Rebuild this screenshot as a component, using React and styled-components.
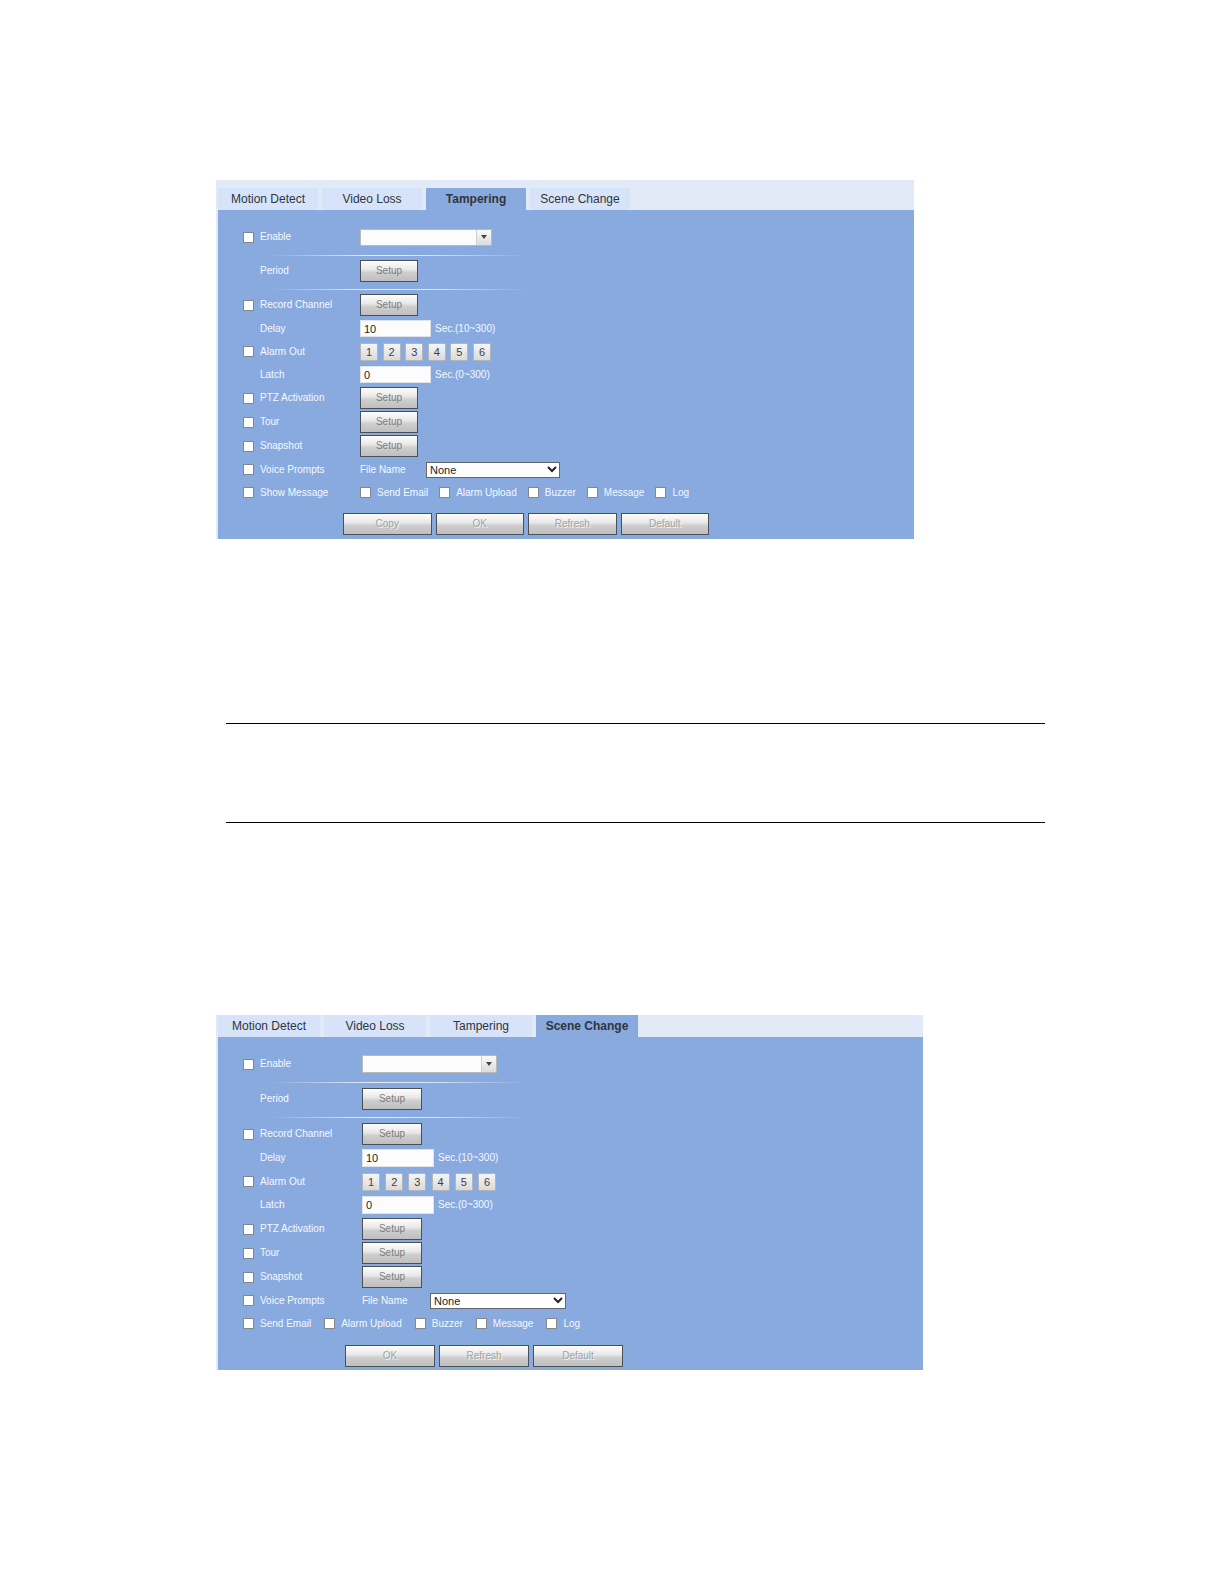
import React, { useId, useState } from "react";
import styled, { createGlobalStyle, ThemeProvider } from "styled-components";

const GlobalStyle = createGlobalStyle`
  body {
    margin: 0;
    background: #ffffff;
    font-family: "Liberation Sans", Arial, sans-serif;
  }
  *, *::before, *::after { box-sizing: border-box; }
  button, input, select { font-family: inherit; margin: 0; }
`;

const tamperingSizes = {
  panel: 696, stripPad: 8, tab: 100, label: 117, combo: 132, field: 71, fieldHeight: 17,
  fieldRow: 23, setup: 58, ruleGap: 3, fileLabel: 66, select: 134, checkGap: 11,
  footerIndent: 125, footer: 366, footerGap: 9, bottom: 4,
};

const sceneSizes = {
  panel: 705, stripPad: 0, tab: 102, label: 119, combo: 135, field: 72, fieldHeight: 18,
  fieldRow: 24, setup: 60, ruleGap: 4, fileLabel: 68, select: 136, checkGap: 13,
  footerIndent: 127, footer: 278, footerGap: 10, bottom: 3,
};

const Page = styled.main`
  padding: 180px 179px 60px 216px;
`;

const Panel = styled.section`
  max-width: ${(p) => p.theme.panel + 2}px;
  padding-left: 2px;
  background: #e2eaf8;
`;

const TabStrip = styled.div`
  display: flex;
  gap: 4px;
  padding-top: ${(p) => p.theme.stripPad}px;
`;

const Tab = styled.button`
  width: ${(p) => p.theme.tab}px;
  height: 22px;
  padding: 0;
  border: 0;
  background: ${(p) => (p.$active ? "#88aade" : "#d7e3f8")};
  color: #30353d;
  font-size: 12px;
  line-height: 22px;
  font-weight: ${(p) => (p.$active ? 700 : 400)};
`;

const Body = styled.form`
  padding: 15px 0 ${(p) => p.theme.bottom}px;
  background: #88aade;
  color: #f6f9ff;
  font-size: 10px;
  line-height: 12px;
`;

const Row = styled.div`
  display: flex;
  align-items: center;
  height: ${(p) => (p.$kind === "button" ? 24 : p.$kind === "field" ? p.theme.fieldRow : 23)}px;
  padding-left: 25px;
`;

const LabelCell = styled.div`
  flex: none;
  display: flex;
  align-items: center;
  width: ${(p) => p.theme.label}px;
  padding-left: ${(p) => (p.$indent ? 17 : 0)}px;
`;

const CheckPair = styled.span`
  display: flex;
  align-items: center;
  gap: 6px;
  white-space: nowrap;
`;

const Box = styled.input`
  appearance: none;
  width: 11px;
  height: 11px;
  border: 1px solid #84878c;
  background: #ffffff;
  &:checked { background: #3d5f96; box-shadow: inset 0 0 0 2px #ffffff; }
`;

const CheckList = styled.div`
  display: flex;
  gap: ${(p) => p.theme.checkGap}px;
`;

const Divider = styled.hr`
  width: 260px;
  height: 1px;
  margin: 6px 0 ${(p) => p.theme.ruleGap}px 50px;
  border: 0;
  background: linear-gradient(90deg, transparent, #e9eef6 40%, #dfe8f6 60%, transparent);
`;

const ComboFrame = styled.span`
  position: relative;
  display: block;
  width: ${(p) => (p.$plain ? p.theme.select : p.theme.combo)}px;
`;

const ComboSelect = styled.select`
  appearance: none;
  display: block;
  width: 100%;
  height: ${(p) => p.theme.fieldHeight}px;
  padding: 0 20px 0 4px;
  border: 1px solid #b9b9b6;
  border-radius: 0;
  background: #fcfcfc;
  font-size: 11px;
`;

const PlainSelect = styled(ComboSelect)`
  height: 16px;
  padding-left: 3px;
  border-color: #63676d;
  background: #ffffff;
  color: #1c1c1c;
`;

const ComboArrow = styled.span`
  position: absolute;
  top: 1px;
  right: 1px;
  bottom: 1px;
  display: flex;
  align-items: center;
  justify-content: center;
  width: 15px;
  border-left: 1px solid #d0d0d0;
  background: linear-gradient(#fafafa, #dcdcdc);
  pointer-events: none;
`;

const PlainArrow = styled(ComboArrow)`
  border-left: 0;
  background: none;
`;

const TextField = styled.input`
  width: ${(p) => p.theme.field}px;
  height: ${(p) => p.theme.fieldHeight}px;
  margin-right: 4px;
  padding: 0 3px;
  border: 1px solid #dfe3ea;
  background: #fcfcfc;
  color: #1c1c1c;
  font-size: 11px;
`;

const PushButton = styled.button`
  height: 22px;
  padding: 0;
  border: 1px solid #4b5057;
  background: linear-gradient(#fdfdfd, #e9e9e9 42%, #cecece 58%, #c0bebe);
  color: #7d7d7d;
  font-size: 10px;
  line-height: 12px;
`;

const SetupButton = styled(PushButton)`
  width: ${(p) => p.theme.setup}px;
`;

const FooterButton = styled(PushButton)`
  color: #a3a3a3;
  text-shadow: 1px 1px 0 #f4f4f4;
`;

const Outputs = styled.div`
  display: flex;
  justify-content: space-between;
  width: ${(p) => p.theme.combo - 1}px;
`;

const OutputButton = styled.button`
  width: 18px;
  height: 18px;
  padding: 0;
  border: 1px solid #b4b5b8;
  border-radius: 1px;
  background: linear-gradient(#f6f6f6, #dadada);
  color: #3f3f3f;
  font-size: 11px;
  line-height: 16px;
`;

const FileLabel = styled.label`
  width: ${(p) => p.theme.fileLabel}px;
`;

const Footer = styled.div`
  display: grid;
  grid-auto-flow: column;
  grid-auto-columns: 1fr;
  gap: 4px;
  max-width: ${(p) => p.theme.footer}px;
  margin: ${(p) => p.theme.footerGap}px 0 0 ${(p) => p.theme.footerIndent}px;
`;

const NoteBlock = styled.section`
  margin: 184px 0 192px 10px;
`;

const NoteRule = styled.hr`
  height: 1px;
  margin: 0;
  border: 0;
  background: #000000;
  & + & { margin-top: 98px; }
`;

function Check({ label }) {
  const id = useId();
  return (
    <CheckPair>
      <Box type="checkbox" id={id} />
      <label htmlFor={id}>{label}</label>
    </CheckPair>
  );
}

function CheckRow({ label, kind, children }) {
  return (
    <Row $kind={kind}>
      <LabelCell><Check label={label} /></LabelCell>
      {children}
    </Row>
  );
}

function SetupRow({ label }) {
  return (
    <CheckRow label={label} kind="button">
      <SetupButton type="button" aria-label={`Setup ${label}`}>Setup</SetupButton>
    </CheckRow>
  );
}

function FieldRow({ label, value, range }) {
  const id = useId();
  return (
    <Row $kind="field">
      <LabelCell $indent><label htmlFor={id}>{label}</label></LabelCell>
      <TextField id={id} defaultValue={value} />
      <span>{range}</span>
    </Row>
  );
}

function DetectPanel({ sizes, initialTab, showMessage, actions }) {
  const [active, setActive] = useState(initialTab);
  const periodId = useId();
  const fileId = useId();
  const events = ["Send Email", "Alarm Upload", "Buzzer", "Message", "Log"];
  return (
    <ThemeProvider theme={sizes}>
      <Panel>
        <TabStrip role="tablist">
          {["Motion Detect", "Video Loss", "Tampering", "Scene Change"].map((name) => (
            <Tab
              key={name}
              type="button"
              role="tab"
              aria-selected={name === active}
              $active={name === active}
              onClick={() => setActive(name)}
            >
              {name}
            </Tab>
          ))}
        </TabStrip>
        <Body onSubmit={(e) => e.preventDefault()}>
          <CheckRow label="Enable" kind="button">
            <ComboFrame>
              <ComboSelect aria-label="Channel"><option value="" /></ComboSelect>
              <ComboArrow>
                <svg width="6" height="4" viewBox="0 0 6 4" aria-hidden="true">
                  <path d="M0 0h6L3 4z" fill="#444444" />
                </svg>
              </ComboArrow>
            </ComboFrame>
          </CheckRow>
          <Divider />
          <Row $kind="button">
            <LabelCell $indent><label htmlFor={periodId}>Period</label></LabelCell>
            <SetupButton type="button" id={periodId}>Setup</SetupButton>
          </Row>
          <Divider />
          <SetupRow label="Record Channel" />
          <FieldRow label="Delay" value="10" range="Sec.(10~300)" />
          <CheckRow label="Alarm Out">
            <Outputs>
              {[1, 2, 3, 4, 5, 6].map((n) => (
                <OutputButton key={n} type="button">{n}</OutputButton>
              ))}
            </Outputs>
          </CheckRow>
          <FieldRow label="Latch" value="0" range="Sec.(0~300)" />
          <SetupRow label="PTZ Activation" />
          <SetupRow label="Tour" />
          <SetupRow label="Snapshot" />
          <CheckRow label="Voice Prompts">
            <FileLabel htmlFor={fileId}>File Name</FileLabel>
            <ComboFrame $plain>
              <PlainSelect id={fileId}><option>None</option></PlainSelect>
              <PlainArrow>
                <svg width="10" height="7" viewBox="0 0 10 7" aria-hidden="true">
                  <path d="M1 1l4 4 4-4" fill="none" stroke="#222222" strokeWidth="2" />
                </svg>
              </PlainArrow>
            </ComboFrame>
          </CheckRow>
          {showMessage ? (
            <CheckRow label="Show Message">
              <CheckList>{events.map((e) => <Check key={e} label={e} />)}</CheckList>
            </CheckRow>
          ) : (
            <Row>
              <CheckList>{events.map((e) => <Check key={e} label={e} />)}</CheckList>
            </Row>
          )}
          <Footer>
            {actions.map((a) => <FooterButton key={a} type="button">{a}</FooterButton>)}
          </Footer>
        </Body>
      </Panel>
    </ThemeProvider>
  );
}

export default function App() {
  return (
    <>
      <GlobalStyle />
      <Page>
        <DetectPanel
          sizes={tamperingSizes}
          initialTab="Tampering"
          showMessage
          actions={["Copy", "OK", "Refresh", "Default"]}
        />
        <NoteBlock>
          <NoteRule />
          <NoteRule />
        </NoteBlock>
        <DetectPanel
          sizes={sceneSizes}
          initialTab="Scene Change"
          actions={["OK", "Refresh", "Default"]}
        />
      </Page>
    </>
  );
}
